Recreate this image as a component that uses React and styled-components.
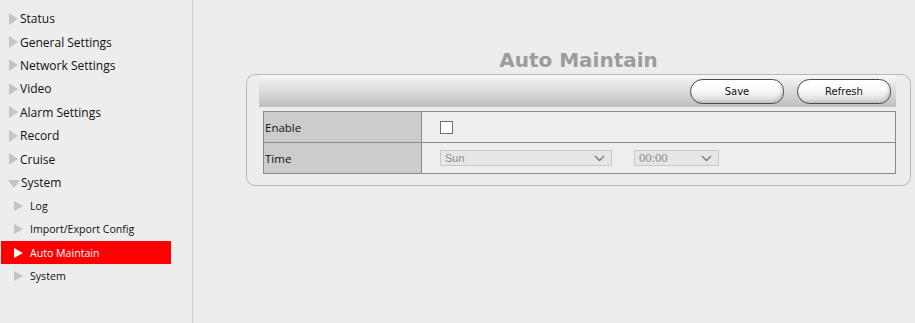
import React from "react";
import styled, { createGlobalStyle } from "styled-components";

const GlobalStyle = createGlobalStyle`
  html, body {
    margin: 0;
    padding: 0;
    background: #ededed;
    font-family: "Open Sans", "DejaVu Sans", sans-serif;
  }
`;

const Page = styled.div`
  display: flex;
  width: 915px;
  height: 323px;
  background: #ededed;
  overflow: hidden;
`;

const Sidebar = styled.div`
  width: 193px;
  flex-shrink: 0;
  border-right: 1px solid #cfcfcf;
  padding-top: 7px;
  box-sizing: border-box;
`;

const MenuItem = styled.div`
  display: flex;
  align-items: center;
  height: 23.4px;
  width: 170px;
  margin-left: 1px;
  padding-left: ${p => (p.$sub ? 12 : 7)}px;
  box-sizing: border-box;
  font-size: ${p => (p.$sub ? 10.6 : 12)}px;
  color: ${p => (p.$active ? "#fff" : "#111")};
  background: ${p => (p.$active ? "#ff0000" : "transparent")};
  gap: ${p => (p.$sub ? 7 : 2)}px;
  white-space: nowrap;
`;

const Arrow = styled.span`
  display: inline-block;
  width: 0;
  height: 0;
  border-top: ${p => (p.$sub ? 5.5 : 6)}px solid transparent;
  border-bottom: ${p => (p.$sub ? 5.5 : 6)}px solid transparent;
  border-left: 9px solid ${p => (p.$active ? "#fff" : "#c4c4c4")};
  margin-left: 1px;
`;

const DownArrow = styled.span`
  display: inline-block;
  width: 0;
  height: 0;
  border-left: 6px solid transparent;
  border-right: 6px solid transparent;
  border-top: 8px solid #c4c4c4;
  margin-top: 3px;
  margin-right: -1px;
`;

const Main = styled.div`
  flex: 1;
  padding-left: 53px;
`;

const Content = styled.div`
  width: 665px;
`;

const Title = styled.h1`
  margin: 47px 0 0;
  height: 27px;
  text-align: center;
  font-family: "DejaVu Sans", Verdana, sans-serif;
  font-weight: bold;
  font-size: 20px;
  line-height: 26px;
  color: #9c9c9c;
`;

const Box = styled.div`
  border: 1px solid #b9b9b9;
  border-radius: 9px;
  padding: 0 14px 11px 12px;
`;

const Header = styled.div`
  display: flex;
  justify-content: flex-end;
  gap: 13px;
  height: 32px;
  padding: 4px 5px 0 0;
  box-sizing: border-box;
  background: linear-gradient(#f7f7f7, #dedede 45%, #bdbdbd);
`;

const Button = styled.button`
  width: 94px;
  height: 25px;
  border: 1px solid #4a4a4a;
  border-radius: 13px 12px 12px 13px;
  background: linear-gradient(#ffffff, #fbfbfb 40%, #d8d8d8);
  box-shadow: inset -2px -2px 3px rgba(0, 0, 0, 0.12);
  font-family: "DejaVu Sans", Verdana, sans-serif;
  font-size: 10px;
  color: #111;
  padding: 0;
`;

const Table = styled.div`
  margin: 4px 0 0 4px;
  border: 1px solid #8a8a8a;
  border-bottom: none;
`;

const Row = styled.div`
  display: grid;
  grid-template-columns: 158px 1fr;
  height: 30px;
  border-bottom: 1px solid #8a8a8a;
`;

const Label = styled.div`
  display: flex;
  align-items: center;
  background: #cccccc;
  border-right: 1px solid #8a8a8a;
  padding-left: 1px;
  font-size: 11.5px;
  color: #111;
`;

const Value = styled.div`
  display: flex;
  align-items: center;
  gap: 22px;
  padding-left: 18px;
  background: #eeeeee;
`;

const Checkbox = styled.span`
  width: 11px;
  height: 11px;
  border: 1px solid #6f6f6f;
  background: #fff;
`;

const Select = styled.div`
  display: flex;
  align-items: center;
  justify-content: space-between;
  width: ${p => p.$width}px;
  height: 16px;
  box-sizing: border-box;
  border: 1px solid #c8c8c8;
  background: #e6e6e6;
  padding: 0 6px 0 4px;
  font-family: ${p => (p.$serif ? '"Liberation Serif", serif' : '"Liberation Sans", Arial, sans-serif')};
  font-size: ${p => (p.$serif ? 12.5 : 11)}px;
  color: #8a8a8a;
`;

const Chevron = () => (
  <svg width="11" height="7" viewBox="0 0 11 7">
    <path d="M1 1 L5.5 5.5 L10 1" fill="none" stroke="#7a7a7a" strokeWidth="1.4" />
  </svg>
);

const menu = [
  { label: "Status" },
  { label: "General Settings" },
  { label: "Network Settings" },
  { label: "Video" },
  { label: "Alarm Settings" },
  { label: "Record" },
  { label: "Cruise" },
  { label: "System", open: true },
  { label: "Log", sub: true },
  { label: "Import/Export Config", sub: true },
  { label: "Auto Maintain", sub: true, active: true },
  { label: "System", sub: true },
];

export default function App() {
  return (
    <>
      <GlobalStyle />
      <Page>
        <Sidebar>
          {menu.map((m, i) => (
            <MenuItem key={i} $sub={m.sub} $active={m.active}>
              {m.open ? <DownArrow /> : <Arrow $sub={m.sub} $active={m.active} />}
              <span>{m.label}</span>
            </MenuItem>
          ))}
        </Sidebar>
        <Main>
          <Content>
            <Title>Auto Maintain</Title>
            <Box>
              <Header>
                <Button>Save</Button>
                <Button>Refresh</Button>
              </Header>
              <Table>
                <Row>
                  <Label>Enable</Label>
                  <Value>
                    <Checkbox />
                  </Value>
                </Row>
                <Row>
                  <Label>Time</Label>
                  <Value>
                    <Select $width={172}>
                      <span>Sun</span>
                      <Chevron />
                    </Select>
                    <Select $width={85} $serif>
                      <span>00:00</span>
                      <Chevron />
                    </Select>
                  </Value>
                </Row>
              </Table>
            </Box>
          </Content>
        </Main>
      </Page>
    </>
  );
}
